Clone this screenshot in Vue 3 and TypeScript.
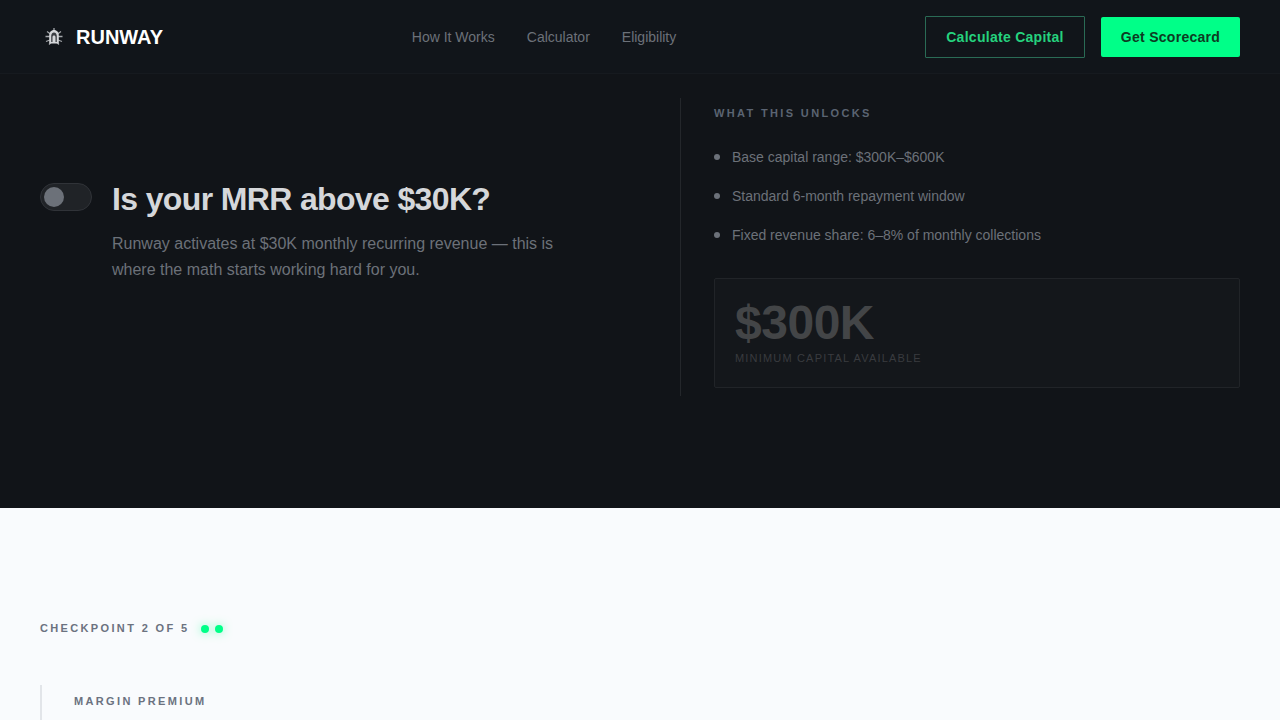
<template>
  <div class="page">
    <header class="nav">
      <div class="brand">
        <svg class="logo" viewBox="0 0 20 20" width="20" height="20" aria-hidden="true">
          <g stroke="#a4a7ab" stroke-width="1.3" fill="none">
            <path d="M3 4.500l3.500 2.500M17 4.500 13.500 7M1.500 9.500H6M18.500 9.500H14M2 14.500 6 13M18 14.500 14 13M5 17.500l2.500-2.500M15 17.500 12.500 15M10 1v2" />
          </g>
          <path d="M10 3c3 0 4.800 2.400 4.800 5.500v8H5.200v-8C5.200 5.400 7 3 10 3z" fill="#d4d6d9" />
          <path d="M10 5.500c1.700 0 2.800 1.500 2.800 3.600v6h-1.300V10c0-.9-.6-1.600-1.500-1.600S8.500 9.100 8.500 10v5.100H7.200v-6C7.200 7 8.300 5.500 10 5.500z" fill="#3b3e43" />
        </svg>
        <span class="brand-name">RUNWAY</span>
      </div>
      <nav class="links">
        <a v-for="link in navLinks" :key="link">{{ link }}</a>
      </nav>
      <div class="actions">
        <button class="btn btn-outline">Calculate Capital</button>
        <button class="btn btn-solid">Get Scorecard</button>
      </div>
    </header>

    <section class="hero">
      <div class="question">
        <div class="toggle"><span class="knob"></span></div>
        <div class="question-text">
          <h1>Is your MRR above $30K?</h1>
          <p>Runway activates at $30K monthly recurring revenue — this is where the math starts working hard for you.</p>
        </div>
      </div>
      <aside class="unlocks">
        <h2>WHAT THIS UNLOCKS</h2>
        <ul>
          <li v-for="item in unlocks" :key="item">{{ item }}</li>
        </ul>
        <div class="capital">
          <div class="amount">$300K</div>
          <div class="amount-label">MINIMUM CAPITAL AVAILABLE</div>
        </div>
      </aside>
    </section>

    <section class="light">
      <div class="checkpoint">
        <span>CHECKPOINT 2 OF 5</span>
        <i class="dot"></i>
        <i class="dot"></i>
      </div>
      <div class="premium">
        <h3>MARGIN PREMIUM</h3>
      </div>
    </section>
  </div>
</template>

<script setup lang="ts">
const navLinks: string[] = ['How It Works', 'Calculator', 'Eligibility']

const unlocks: string[] = [
  'Base capital range: $300K–$600K',
  'Standard 6-month repayment window',
  'Fixed revenue share: 6–8% of monthly collections'
]
</script>

<style>
html,
body {
  margin: 0;
  height: 720px;
  overflow: hidden;
  background: #f9fbfd;
}
</style>

<style scoped>
.page {
  font-family: 'Liberation Sans', Arial, sans-serif;
}

.nav {
  height: 73px;
  display: flex;
  justify-content: space-between;
  align-items: center;
  padding: 0 40px;
  background: #11151a;
  border-bottom: 1px solid #161a1f;
}

.brand {
  display: flex;
  align-items: center;
  gap: 12px;
}

.logo {
  margin-left: 4px;
}

.brand-name {
  margin-top: 2px;
  font-size: 20px;
  font-weight: 700;
  color: #fff;
}

.links {
  display: flex;
  gap: 32px;
}

.links a {
  font-size: 14px;
  color: #6c7179;
}

.actions {
  display: flex;
  align-items: center;
  gap: 16px;
}

.btn {
  font-family: inherit;
  font-size: 14px;
  font-weight: 700;
  letter-spacing: 0.28px;
  cursor: pointer;
}

.btn-outline {
  width: 160px;
  height: 42px;
  color: #25d27e;
  background: transparent;
  border: 1px solid #2a6b55;
  border-radius: 1px;
}

.btn-solid {
  width: 139px;
  height: 40px;
  color: #0d3b22;
  background: #00ff88;
  border: none;
  border-radius: 2px;
}

.hero {
  height: 298px;
  padding: 24px 40px 112px;
  display: grid;
  grid-template-columns: 640px 1fr;
  background: #111418;
}

.question {
  display: flex;
  align-items: flex-start;
  gap: 20px;
  padding-top: 85px;
}

.toggle {
  width: 50px;
  height: 26px;
  flex: none;
  position: relative;
  background: #202327;
  border: 1px solid #303338;
  border-radius: 14px;
}

.knob {
  position: absolute;
  left: 3px;
  top: 3px;
  width: 20px;
  height: 20px;
  border-radius: 50%;
  background: #6c7179;
}

.question-text h1 {
  margin: 0;
  font-size: 32px;
  line-height: 32px;
  font-weight: 700;
  letter-spacing: -0.64px;
  color: #d5d7da;
}

.question-text p {
  margin: 16px 0 0;
  max-width: 460px;
  font-size: 16px;
  line-height: 26px;
  color: #6c7179;
}

.unlocks {
  padding-left: 33px;
  border-left: 1px solid #24272b;
}

.unlocks h2 {
  margin: 9px 0 0;
  font-size: 11px;
  line-height: 13px;
  font-weight: 700;
  letter-spacing: 2.35px;
  color: #5b6472;
}

.unlocks ul {
  list-style: none;
  margin: 28px 0 0;
  padding: 0;
  display: flex;
  flex-direction: column;
  gap: 21px;
}

.unlocks li {
  position: relative;
  padding-left: 18px;
  font-size: 14px;
  line-height: 18px;
  color: #6c7179;
}

.unlocks li::before {
  content: '';
  position: absolute;
  left: 0;
  top: 6px;
  width: 6px;
  height: 6px;
  border-radius: 50%;
  background: #6c7179;
}

.capital {
  margin-top: 34px;
  height: 110px;
  box-sizing: border-box;
  padding: 20px;
  background: #14171b;
  border: 1px solid #212428;
  border-radius: 2px;
}

.amount {
  font-size: 48px;
  line-height: 48px;
  font-weight: 700;
  letter-spacing: -0.48px;
  color: #434547;
}

.amount-label {
  margin-top: 4px;
  font-size: 11px;
  line-height: 14px;
  letter-spacing: 1.18px;
  color: #393b3f;
}

.light {
  background: #f9fbfd;
  padding: 113px 40px 0;
  height: 99px;
}

.checkpoint {
  display: flex;
  align-items: center;
  font-size: 11px;
  line-height: 14px;
  font-weight: 700;
  letter-spacing: 2.35px;
  color: #6b7280;
}

.checkpoint span {
  margin-right: 12px;
}

.dot {
  width: 8px;
  height: 8px;
  margin-top: 2px;
  margin-right: 6px;
  border-radius: 50%;
  background: #00ff88;
  box-shadow: 0 0 10px rgba(0, 255, 136, 0.5);
}

.premium {
  margin-top: 50px;
  padding: 9px 0 0 32px;
  border-left: 2px solid #e2e5e9;
  height: 40px;
}

.premium h3 {
  margin: 0;
  font-size: 11px;
  line-height: 14px;
  font-weight: 700;
  letter-spacing: 2.35px;
  color: #6b7280;
}
</style>
